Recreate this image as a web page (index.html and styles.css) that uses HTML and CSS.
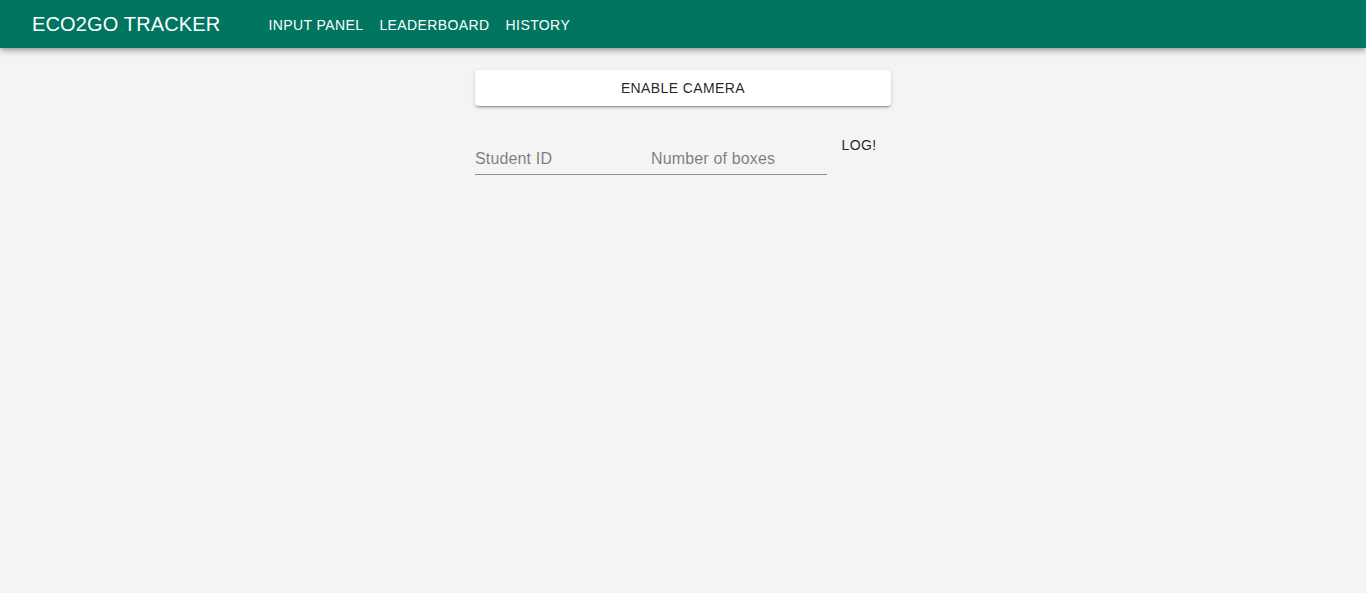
FILE: index.html
```html
<!DOCTYPE html>
<html lang="en">
<head>
    <meta charset="UTF-8">
    <meta name="viewport" content="width=device-width, initial-scale=1.0">
    <title>Eco2Go Tracker</title>
    <link rel="stylesheet" href="styles.css">
</head>
<body>
    <header class="app-bar">
        <div class="toolbar">
            <div class="brand">ECO2GO TRACKER</div>
            <nav class="nav">
                <a class="nav-link" href="#">INPUT PANEL</a>
                <a class="nav-link" href="#">LEADERBOARD</a>
                <a class="nav-link" href="#">HISTORY</a>
            </nav>
        </div>
    </header>

    <main class="panel">
        <button class="camera-btn" type="button">ENABLE CAMERA</button>

        <form class="log-form" onsubmit="return false">
            <div class="field">
                <input class="field-input" type="text" placeholder="Student ID">
            </div>
            <div class="field">
                <input class="field-input" type="number" placeholder="Number of boxes">
            </div>
            <button class="log-btn" type="submit">LOG!</button>
        </form>
    </main>
</body>
</html>
```

FILE: styles.css
```css
body, html {
    margin: 0;
    padding: 0;
    height: 100%;
    font-family: 'Liberation Sans', Arial, sans-serif;
    background-color: #f4f4f4;
    color: rgba(0, 0, 0, 0.87);
}
.app-bar {
    background-color: #00755f;
    color: #fff;
    box-shadow: 0 2px 4px -1px rgba(0, 0, 0, 0.2), 0 4px 5px 0 rgba(0, 0, 0, 0.14), 0 1px 10px 0 rgba(0, 0, 0, 0.12);
    position: relative;
    z-index: 2;
}
.toolbar {
    display: flex;
    align-items: center;
    height: 48px;
    padding: 0 32px;
}
.brand {
    font-size: 20px;
    font-weight: 400;
    letter-spacing: 0.15px;
    margin-right: 40px;
}
.nav {
    display: flex;
    padding-top: 2px;
}
.nav-link {
    color: #fff;
    text-decoration: none;
    font-size: 14px;
    font-weight: 400;
    letter-spacing: 0.4px;
    padding: 6px 8px;
    line-height: 1.75;
}
.panel {
    width: 416px;
    margin: 0 auto;
    padding-top: 22px;
}
.camera-btn {
    display: block;
    width: 100%;
    height: 36px;
    background-color: #fff;
    color: rgba(0, 0, 0, 0.87);
    border: none;
    border-radius: 4px;
    font-family: inherit;
    font-size: 14px;
    font-weight: 400;
    letter-spacing: 0.4px;
    cursor: pointer;
    box-shadow: 0 3px 1px -2px rgba(0, 0, 0, 0.2), 0 2px 2px 0 rgba(0, 0, 0, 0.14), 0 1px 5px 0 rgba(0, 0, 0, 0.12);
}
.log-form {
    display: flex;
    align-items: flex-start;
    margin-top: 21px;
}
.field {
    width: 176px;
    margin-top: 16px;
    border-bottom: 1px solid rgba(0, 0, 0, 0.42);
}
.field-input {
    width: 100%;
    box-sizing: border-box;
    border: none;
    outline: none;
    background: transparent;
    font-family: inherit;
    font-size: 16px;
    letter-spacing: 0.15px;
    color: rgba(0, 0, 0, 0.87);
    padding: 7px 0 6px;
    height: 31px;
    -moz-appearance: textfield;
}
.field-input::-webkit-outer-spin-button,
.field-input::-webkit-inner-spin-button {
    -webkit-appearance: none;
    margin: 0;
}
.field-input::placeholder {
    color: rgba(0, 0, 0, 0.5);
}
.log-btn {
    width: 64px;
    height: 36px;
    background: transparent;
    border: none;
    font-family: inherit;
    font-size: 14px;
    letter-spacing: 0.4px;
    color: rgba(0, 0, 0, 0.87);
    text-align: center;
    padding: 0 8px;
    cursor: pointer;
}
```
